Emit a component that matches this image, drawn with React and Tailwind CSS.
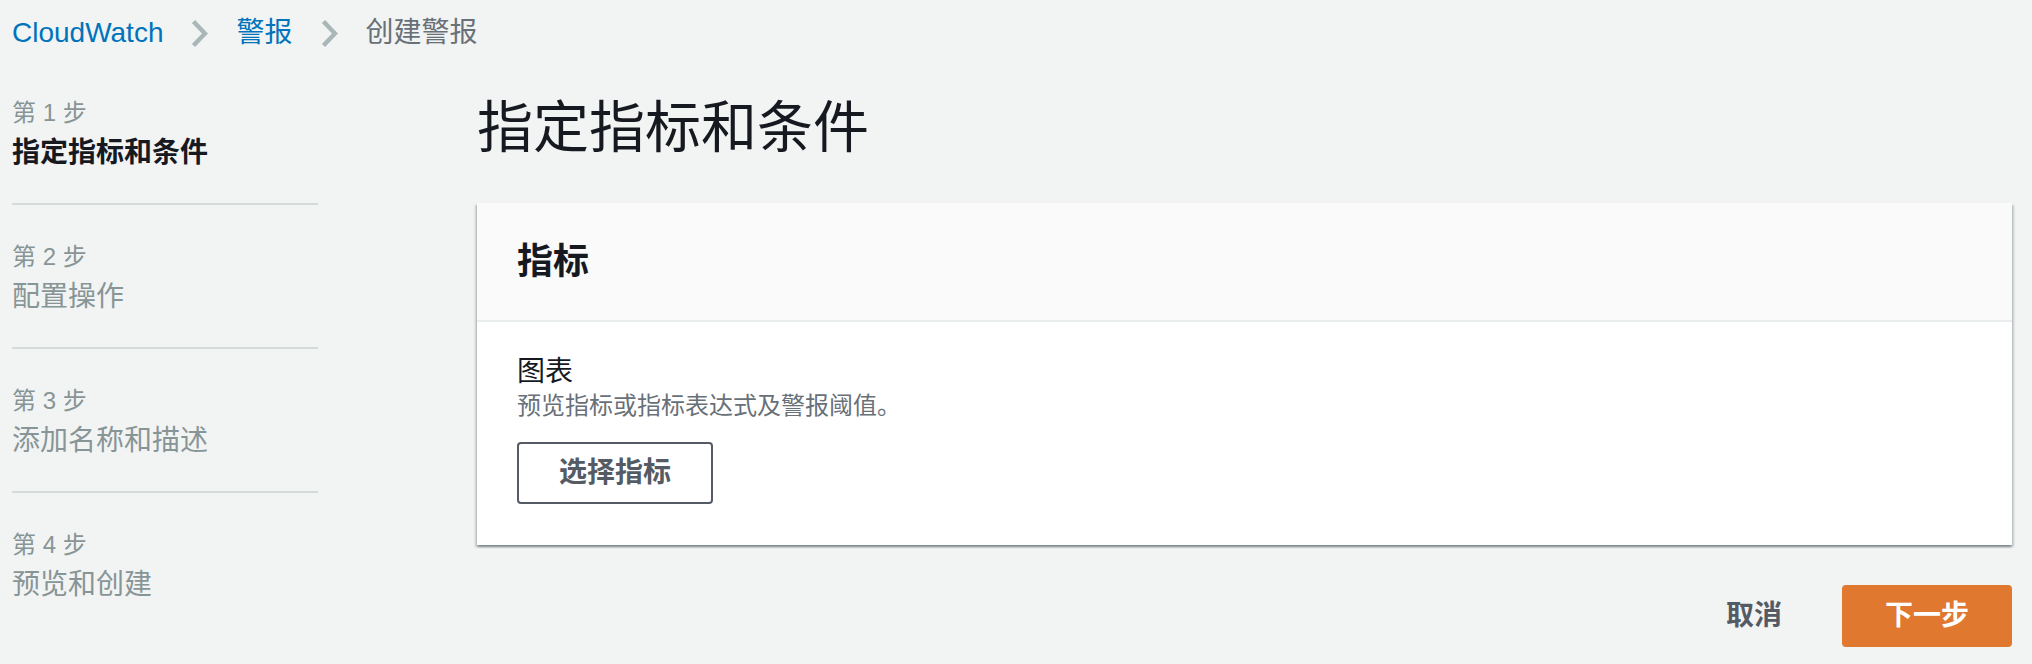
import React from 'react';

const steps = [
  { n: 1, title: '指定指标和条件', active: true },
  { n: 2, title: '配置操作' },
  { n: 3, title: '添加名称和描述' },
  { n: 4, title: '预览和创建' },
];

function Chevron() {
  return (
    <svg width="17" height="29" viewBox="0 0 17 29" fill="none" stroke="#aab7b8" strokeWidth="4.5">
      <path d="M2.5 2.5 L14 14.5 L2.5 26.5" />
    </svg>
  );
}

export default function App() {
  return (
    <div className="min-h-screen bg-[#f2f3f3] pl-[12px] pr-[20px] font-['Liberation_Sans','Noto_Sans_CJK_SC',sans-serif]">
      {/* breadcrumb */}
      <nav className="flex items-center gap-[28px] pt-[13px] text-[28px] leading-[40px]">
        <a className="text-[#0073bb]">CloudWatch</a>
        <Chevron />
        <a className="text-[#0073bb]">警报</a>
        <Chevron />
        <span className="text-[#687078]">创建警报</span>
      </nav>

      <div className="flex gap-[159px]">
        {/* wizard steps */}
        <aside className="w-[306px] shrink-0 mt-[8px]">
          <ul>
            {steps.map((s, i) => (
              <li
                key={s.n}
                className={i > 0 ? 'border-t-2 border-[#d5dbdb] pt-[34px] pb-[30px]' : 'pt-[34px] pb-[30px]'}
              >
                <div className="text-[24px] leading-[36px] mb-[2px] text-[#879596]">第 {s.n} 步</div>
                <div
                  className={
                    s.active
                      ? 'text-[28px] leading-[40px] font-bold text-[#16191f]'
                      : 'text-[28px] leading-[40px] text-[#879596]'
                  }
                >
                  {s.title}
                </div>
              </li>
            ))}
          </ul>
        </aside>

        <main className="flex-1 min-w-0">
          <h1 className="mt-[43px] mb-[43px] text-[56px] leading-[64px] text-[#16191f]">指定指标和条件</h1>

          <div className="bg-white shadow-[0_2px_2px_0_rgba(0,28,36,0.3),2px_2px_2px_0_rgba(0,28,36,0.15),-2px_2px_2px_0_rgba(0,28,36,0.15)]">
            <div className="bg-[#fafafa] border-b-2 border-[#eaeded] px-[40px] pt-[37px] pb-[36px]">
              <h2 className="text-[36px] leading-[44px] font-bold text-[#16191f]">指标</h2>
            </div>
            <div className="px-[40px] pt-[30px] pb-[41px]">
              <div className="text-[28px] leading-[40px] text-[#16191f]">图表</div>
              <div className="text-[24px] leading-[28px] text-[#687078]">预览指标或指标表达式及警报阈值。</div>
              <button className="mt-[22px] border-2 border-[#545b64] rounded-[4px] bg-white px-[40px] py-[8px] text-[28px] leading-[42px] font-bold text-[#545b64]">
                选择指标
              </button>
            </div>
          </div>

          <div className="mt-[40px] flex items-center justify-end gap-[18px]">
            <button className="border-2 border-transparent px-[40px] py-[8px] text-[28px] leading-[42px] font-bold text-[#545b64]">
              取消
            </button>
            <button className="border-2 border-[#e0792f] rounded-[4px] bg-[#e0792f] px-[41px] py-[8px] text-[28px] leading-[42px] font-bold text-white">
              下一步
            </button>
          </div>
        </main>
      </div>
    </div>
  );
}
